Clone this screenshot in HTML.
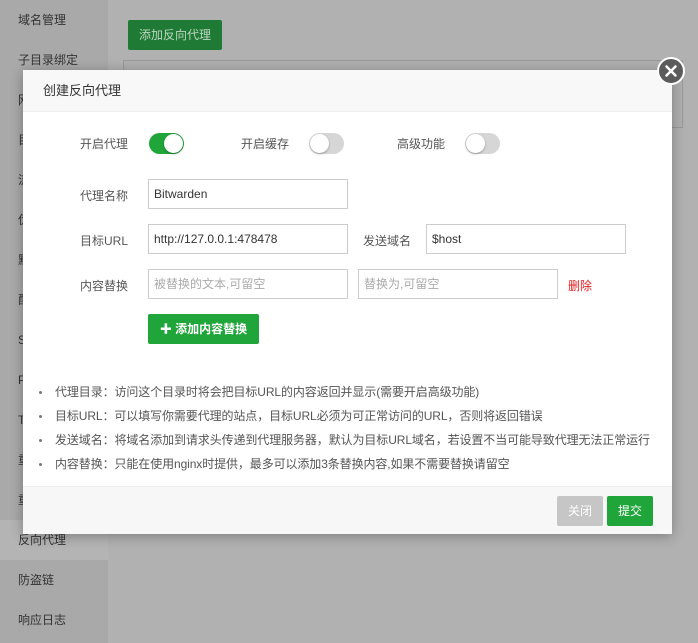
<!DOCTYPE html>
<html><head><meta charset="utf-8"><style>
*{box-sizing:border-box;margin:0;padding:0}
body{width:698px;height:643px;overflow:hidden;background:#b1b1b1;font-family:"Liberation Sans","Noto Sans CJK SC",sans-serif;font-size:12px;color:#333;position:relative}
.side{position:absolute;left:0;top:0;width:108px;height:643px;background:#a9a9a9}
.side div{height:40px;line-height:40px;padding-left:18px;color:#333;font-size:12px}
.side .act{background:#b4b4b4}
.addbtn{position:absolute;left:128px;top:20px;width:94px;height:30px;background:#1f7a35;color:#bcd6c0;line-height:30px;text-align:center;border-radius:2px}
.tbl{position:absolute;left:123px;top:60px;width:560px;height:68px;border:1px solid #999;background:#afafaf}
.modal{position:absolute;left:23px;top:70px;width:649px;height:464px;background:#fff;box-shadow:0 2px 12px rgba(0,0,0,.3)}
.hd{height:42px;background:#f8f8f8;border-bottom:1px solid #eee;line-height:42px;padding-left:20px;font-size:13px;color:#333}
.ft{position:absolute;left:0;bottom:0;width:100%;height:48px;background:#f7f7f7;border-top:1px solid #eee}
.ab{position:absolute}
.lbl{position:absolute;font-size:12px;color:#555;text-align:right;width:80px}
.tog{position:absolute;width:35px;height:21px;border-radius:11px;background:#d6d6d6}
.tog::after{content:"";position:absolute;left:1px;top:1px;width:19px;height:19px;border-radius:50%;background:#fff;box-shadow:0 1px 2px rgba(0,0,0,.3)}
.tog.on{background:#20a53a}.tog.on::after{left:15px}
.in{position:absolute;height:30px;border:1px solid #ccc;line-height:28px;padding-left:5px;font-size:12px;color:#333}
.ph{color:#aaa}
ul{position:absolute;left:12px;top:310px;list-style:none;width:640px}
ul li{height:24px;line-height:24px;color:#555;font-size:12px;position:relative;padding-left:20px;white-space:nowrap;letter-spacing:-0.1px}
ul li::before{content:"";position:absolute;left:4px;top:11px;width:3px;height:3px;border-radius:50%;background:#777}
.btn{position:absolute;height:30px;line-height:30px;text-align:center;color:#fff;border-radius:2px;font-size:12px}
</style></head><body>
<div class="side">
<div>域名管理</div><div>子目录绑定</div><div>网</div><div>目</div><div>流</div><div>伪</div><div>默</div><div>配</div><div>S</div><div>P</div><div>T</div><div>重</div><div>重</div><div class="act">反向代理</div><div>防盗链</div><div>响应日志</div>
</div>
<div class="addbtn">添加反向代理</div>
<div class="tbl"></div>
<div class="modal">
<div class="hd">创建反向代理</div>
<div class="lbl" style="left:25px;top:65px">开启代理</div><div class="tog on" style="left:126px;top:63px"></div>
<div class="lbl" style="left:186px;top:65px">开启缓存</div><div class="tog" style="left:286px;top:63px"></div>
<div class="lbl" style="left:342px;top:65px">高级功能</div><div class="tog" style="left:442px;top:63px"></div>
<div class="lbl" style="left:25px;top:117px">代理名称</div>
<div class="in" style="left:125px;top:109px;width:200px">Bitwarden</div>
<div class="lbl" style="left:25px;top:162px">目标URL</div>
<div class="in" style="left:125px;top:154px;width:200px">http://127.0.0.1:478478</div>
<div class="lbl" style="left:308px;top:162px">发送域名</div>
<div class="in" style="left:403px;top:154px;width:200px">$host</div>
<div class="lbl" style="left:25px;top:207px">内容替换</div>
<div class="in ph" style="left:125px;top:199px;width:200px">被替换的文本,可留空</div>
<div class="in ph" style="left:335px;top:199px;width:200px">替换为,可留空</div>
<div class="ab" style="left:545px;top:207px;color:#e02020">删除</div>
<div class="btn" style="left:125px;top:244px;width:111px;background:#20a53a;font-weight:bold">✚ 添加内容替换</div>
<ul>
<li>代理目录：访问这个目录时将会把目标URL的内容返回并显示(需要开启高级功能)</li>
<li>目标URL：可以填写你需要代理的站点，目标URL必须为可正常访问的URL，否则将返回错误</li>
<li>发送域名：将域名添加到请求头传递到代理服务器，默认为目标URL域名，若设置不当可能导致代理无法正常运行</li>
<li>内容替换：只能在使用nginx时提供，最多可以添加3条替换内容,如果不需要替换请留空</li>
</ul>
<div class="ft">
<div class="btn" style="left:534px;top:9px;width:46px;background:#c6c6c6">关闭</div>
<div class="btn" style="left:584px;top:9px;width:46px;background:#20a53a">提交</div>
</div>
</div>
<div class="ab" style="left:657px;top:57px;width:28px;height:28px;border-radius:50%;background:#5b5b5b;border:2px solid #fff">
<svg width="24" height="24" viewBox="0 0 24 24" style="position:absolute;left:0;top:0"><path d="M7.5 7.5L16.5 16.5M16.5 7.5L7.5 16.5" stroke="#fff" stroke-width="2.5" stroke-linecap="round"/></svg>
</div>
</body></html>
